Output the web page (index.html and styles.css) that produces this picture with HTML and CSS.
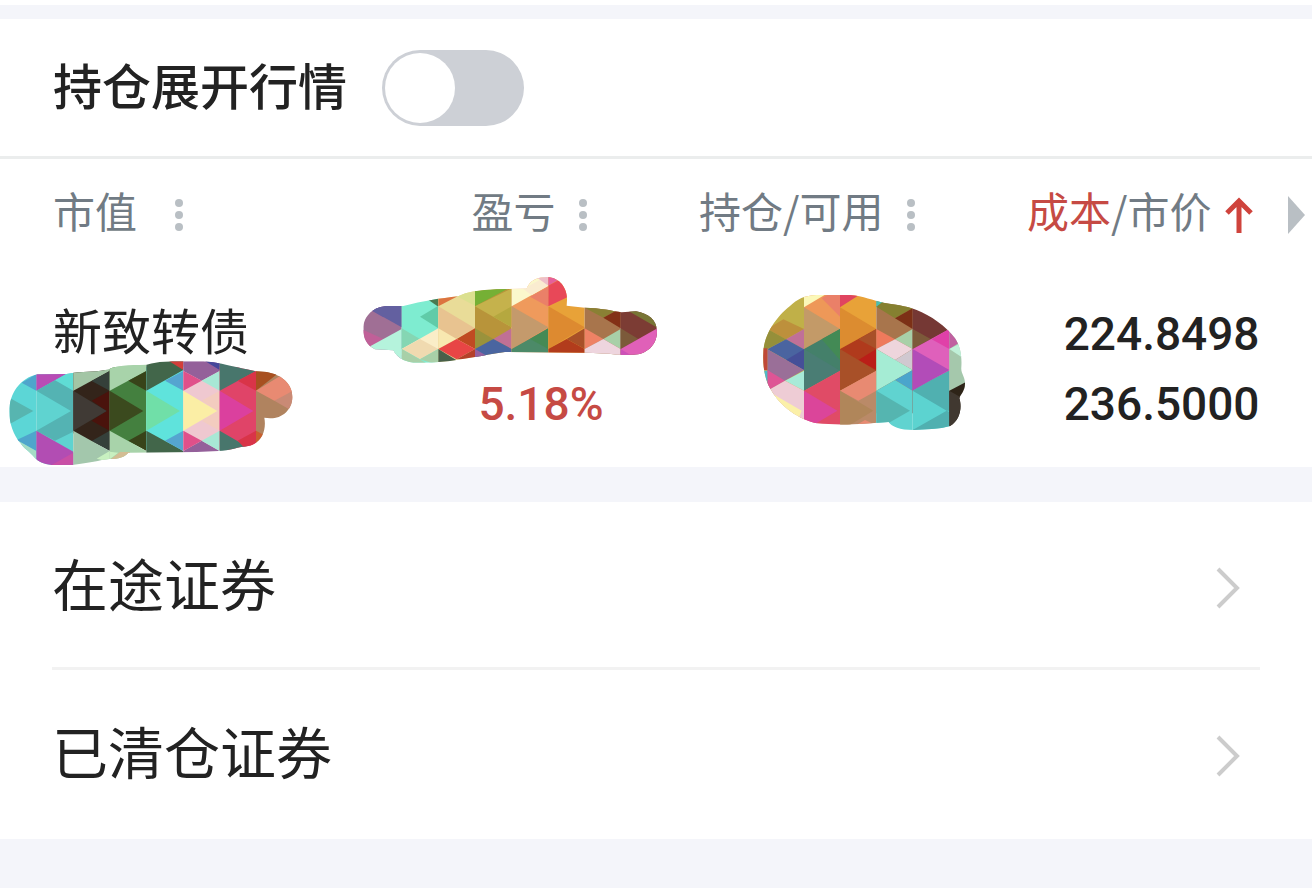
FILE: index.html
```
<!DOCTYPE html>
<html lang="zh-CN">
<head>
  <meta charset="UTF-8">
  <meta name="viewport" content="width=device-width, initial-scale=1.0">
  <title>持仓</title>
  <link rel="stylesheet" href="styles.css">
</head>
<body>
  <main>
    <section class="panel holdings">
      <div class="toolbar">
        <label for="expand">持仓展开行情</label>
        <input type="checkbox" id="expand" class="switch" role="switch">
      </div>

      <table class="positions">
        <thead>
          <tr>
            <th class="col-name" scope="col">
              <button class="sort" type="button"><span class="label">市值</span>
                <svg class="icon" viewBox="0 0 40 40" fill="#b9bfc4"><circle cx="20" cy="7" r="4"/><circle cx="20" cy="19" r="4"/><circle cx="20" cy="31" r="4"/></svg>
              </button>
            </th>
            <th scope="col">
              <button class="sort" type="button"><span class="label">盈亏</span>
                <svg class="icon" viewBox="0 0 40 40" fill="#b9bfc4"><circle cx="19" cy="7" r="4"/><circle cx="19" cy="19" r="4"/><circle cx="19" cy="31" r="4"/></svg>
              </button>
            </th>
            <th scope="col">
              <button class="sort" type="button"><span class="label">持仓/可用</span>
                <svg class="icon" viewBox="0 0 40 40" fill="#b9bfc4"><circle cx="19" cy="7" r="4"/><circle cx="19" cy="19" r="4"/><circle cx="19" cy="31" r="4"/></svg>
              </button>
            </th>
            <th scope="col">
              <button class="sort" type="button"><span class="label"><span class="red">成本</span>/市价</span>
                <svg class="icon" viewBox="0 0 40 40" fill="none" stroke="#cf433c" stroke-width="5"><path d="M19 37V5M7 17L19 5L31 17"/></svg>
              </button>
            </th>
            <th class="col-more" scope="col">
              <button class="more" type="button" aria-label="更多"><svg viewBox="0 0 18 38" fill="#b9bfc4"><path d="M0 0L17 19L0 38Z"/></svg></button>
            </th>
          </tr>
        </thead>
        <tbody>
          <tr>
            <td class="col-name">
              <span class="name">新致转债</span>
              <svg class="mosaic mosaic-name" viewBox="0 0 930 375">
                <clipPath id="clip-name"><path d="M28 185C28 130 60 85 112 73L200 72L222 68C260 64 295 66 328 57C350 46 380 45 440 44C480 34 500 34 550 34L610 34C650 36 690 48 768 64L800 66C850 75 878 105 877 143C876 180 845 206 810 205L793 203C800 240 785 280 745 288C715 290 690 303 655 303L590 306L385 308C375 322 350 328 328 327C300 330 265 340 222 344L155 345C130 342 115 335 105 324C90 305 70 295 62 280C40 255 28 220 28 185Z"/></clipPath>
                <g clip-path="url(#clip-name)">
                  <path fill="#5cd6d6" d="M0 0H109V375H0Z"/>
                  <path fill="#57b5b0" d="M28 143L100 183L28 223Z"/>
                  <path fill="#4fa5cc" d="M65 98L109 72V122ZM50 270L109 242V303Z"/>
                  <path fill="#a5dcc5" d="M50 270L109 303V345H50Z"/>
                  <path fill="#5fd3d0" d="M109 0H220V375H109Z"/>
                  <path fill="#b84cb5" d="M109 60H220L109 122Z"/>
                  <path fill="#5fdcd5" d="M165 91L220 60V125Z"/>
                  <path fill="#54b3b3" d="M109 122L165 91L220 122V245L165 272L109 242L213 183Z"/>
                  <path fill="#b24db3" d="M109 242L220 305V345H109Z"/>
                  <path fill="#c94fa5" d="M155 345L220 308V345Z"/>
                  <path fill="#33241a" d="M220 60H329V300L220 250Z"/>
                  <path fill="#a3c5a5" d="M220 40H329V63L220 122Z"/>
                  <path fill="#35403a" d="M275 93L329 63V122ZM275 273L329 242V303Z"/>
                  <path fill="#4a130c" d="M275 152L329 122V242L275 212L320 183Z"/>
                  <path fill="#403a35" d="M220 122L320 183L220 242Z"/>
                  <path fill="#a3c7ac" d="M220 242L329 303V350H220Z"/>
                  <path fill="#c8f0c0" d="M290 326L329 303V335Z"/>
                  <path fill="#44803f" d="M329 50H439V300L329 250Z"/>
                  <path fill="#a8d3aa" d="M329 40H439V63L329 122Z"/>
                  <path fill="#384319" d="M385 92L439 63V122ZM385 272L439 242V303Z"/>
                  <path fill="#3b4a1e" d="M329 122L430 183L329 242Z"/>
                  <path fill="#a8d3aa" d="M329 242L439 303V335H329Z"/>
                  <path fill="#c8f0c0" d="M329 305L355 308L329 328Z"/>
                  <path fill="#d3bd93" d="M329 330L360 306H390V330Z"/>
                  <path fill="#5fe3dc" d="M439 50H550V300H439Z"/>
                  <path fill="#42664a" d="M439 30H550V60L439 122ZM439 242L550 303V315H439Z"/>
                  <path fill="#d33e3a" d="M502 30H550V60Z"/>
                  <path fill="#55a5d0" d="M495 92L550 63V122ZM495 272L550 242V303Z"/>
                  <path fill="#70dfa8" d="M439 122L540 183L439 242Z"/>
                  <path fill="#efc8d0" d="M550 50H659V300H550Z"/>
                  <path fill="#94609a" d="M550 30H659V63L605 92L550 63ZM550 303L605 272L659 303V315H550Z"/>
                  <path fill="#45479a" d="M610 30H659V60Z"/>
                  <path fill="#e0508a" d="M550 63L605 92L550 122ZM550 242L605 272L550 303Z"/>
                  <path fill="#a8e8d5" d="M605 92L659 63V122ZM605 272L659 242V303Z"/>
                  <path fill="#f3ccbf" d="M605 152L659 122V242L605 212L652 183Z"/>
                  <path fill="#fbeea5" d="M550 122L652 183L550 242Z"/>
                  <path fill="#e04468" d="M659 50H768V300H659Z"/>
                  <path fill="#48766c" d="M659 30H768V63L659 122ZM659 242L742 290L659 315Z"/>
                  <path fill="#d93448" d="M713 92L768 63V122ZM713 272L768 242V303H742Z"/>
                  <path fill="#db409e" d="M659 122L760 183L659 242Z"/>
                  <path fill="#b0835f" d="M768 0H880V375H768Z"/>
                  <path fill="#a85020" d="M768 50H860L768 122Z"/>
                  <path fill="#e88a72" d="M768 122L850 72L880 90V152H823Z"/>
                  <path fill="#c98a75" d="M823 152L880 122V185Z"/>
                  <path fill="#c8602f" d="M768 242L805 262L768 300Z"/>
                </g>
              </svg>
            </td>
            <td>
              <span class="num red">5.18%</span>
              <svg class="mosaic mosaic-profit" viewBox="0 0 960 330">
                <clipPath id="clip-profit"><path d="M40 192C40 150 75 122 115 123L160 123C220 108 270 100 325 94C350 80 390 76 440 73L530 71C540 45 565 35 593 36C630 38 652 70 651 105L650 122L704 128C750 128 790 138 815 142L858 139C895 145 921 165 921 200C921 240 890 268 850 269L800 269C770 264 740 265 704 263L465 261C430 266 400 272 375 276L300 288L240 293L190 293C160 290 140 275 130 256L75 253C50 240 40 220 40 192Z"/></clipPath>
                <g clip-path="url(#clip-profit)">
                  <path fill="#a06f95" d="M0 0H155V330H0Z"/>
                  <path fill="#7a5aa0" d="M45 125H110L100 157Z"/>
                  <path fill="#6360a0" d="M45 125L155 110V187Z"/>
                  <path fill="#c06098" d="M30 190L100 222L65 245H30Z"/>
                  <path fill="#b5f3dc" d="M55 247L155 192V270H55Z"/>
                  <path fill="#7eecd0" d="M155 0H265V330H155Z"/>
                  <path fill="#4a7a50" d="M228 100H265V125Z"/>
                  <path fill="#60cba8" d="M210 155L265 122V190Z"/>
                  <path fill="#85d6b3" d="M155 190L210 222L155 252Z"/>
                  <path fill="#faedc8" d="M155 252L265 190V252Z"/>
                  <path fill="#f0dab0" d="M155 252L210 222L265 252L210 283Z"/>
                  <path fill="#a8d0a8" d="M155 252L230 295H155ZM210 283L265 252V300Z"/>
                  <path fill="#b5f3dc" d="M120 240L155 252V300H120Z"/>
                  <path fill="#e9dc98" d="M265 0H375V330H265Z"/>
                  <path fill="#dc7440" d="M265 90H330L265 124Z"/>
                  <path fill="#dbe08f" d="M320 94L375 70V122Z"/>
                  <path fill="#e8c390" d="M265 124L375 190L265 250Z"/>
                  <path fill="#f8e8b0" d="M265 190L320 222L265 252Z"/>
                  <path fill="#c04a22" d="M320 222L375 190V252Z"/>
                  <path fill="#e84545" d="M265 252L320 222L375 252L320 283Z"/>
                  <path fill="#48604a" d="M265 252L335 295H265Z"/>
                  <path fill="#b5402a" d="M320 283L375 252V285Z"/>
                  <path fill="#b8943a" d="M375 0H485V330H375Z"/>
                  <path fill="#75b035" d="M375 65H485L375 124Z"/>
                  <path fill="#c5b24c" d="M375 124L485 70V187Z"/>
                  <path fill="#b5a83f" d="M430 155L485 124V187Z"/>
                  <path fill="#9a923c" d="M375 190L430 222L375 252Z"/>
                  <path fill="#c07095" d="M430 222L485 190V252Z"/>
                  <path fill="#4a65a0" d="M375 252L430 222L485 252V275H375Z"/>
                  <path fill="#9560a0" d="M375 252L415 275L375 285Z"/>
                  <path fill="#ef9a5c" d="M485 0H595V330H485Z"/>
                  <path fill="#fbf8cc" d="M485 60L595 30V62L485 124Z"/>
                  <path fill="#faecd0" d="M520 72L595 30V62L545 91Z"/>
                  <path fill="#eebfc8" d="M550 30H595V62Z"/>
                  <path fill="#ea8068" d="M540 95L595 65V125Z"/>
                  <path fill="#c49a6c" d="M485 124L595 187L485 252Z"/>
                  <path fill="#4c8a68" d="M485 252L595 190V265H485Z"/>
                  <path fill="#458a55" d="M540 222L595 190V252Z"/>
                  <path fill="#e8a238" d="M595 0H704V330H595Z"/>
                  <path fill="#e5609a" d="M595 30H651L595 62Z"/>
                  <path fill="#e84858" d="M595 62L655 30V95L595 124Z"/>
                  <path fill="#dd8a30" d="M595 124L704 187L595 252Z"/>
                  <path fill="#a85028" d="M650 222L704 190V252Z"/>
                  <path fill="#b23c1c" d="M595 252L650 222L704 252V268H595Z"/>
                  <path fill="#a8754c" d="M704 0H812V330H704Z"/>
                  <path fill="#8a8034" d="M704 120H812V130L760 158L704 128Z"/>
                  <path fill="#833015" d="M760 158L812 130V190Z"/>
                  <path fill="#ee8265" d="M704 190L760 222L704 252Z"/>
                  <path fill="#a8d0a8" d="M760 222L812 192V252Z"/>
                  <path fill="#eed5de" d="M704 252L760 222L812 252V275H704Z"/>
                  <path fill="#7c3c34" d="M812 0H925V330H812Z"/>
                  <path fill="#787535" d="M830 135H925V190Z"/>
                  <path fill="#7c5a3a" d="M812 190L865 222L812 252Z"/>
                  <path fill="#e060b8" d="M812 252L925 188V275H812Z"/>
                  <path fill="#cc50b8" d="M812 252L850 275H812Z"/>
                </g>
              </svg>
            </td>
            <td>
              <svg class="mosaic mosaic-amount" viewBox="0 0 690 480">
                <clipPath id="clip-amount"><path d="M40 220C42 160 80 110 120 78C140 58 165 46 200 45L300 45C340 48 370 62 400 68C450 76 480 80 500 90C540 105 590 140 615 175C632 200 636 230 634 262C632 280 645 290 645 310C645 335 630 345 628 355C636 380 632 420 600 438C570 448 520 448 490 450C450 450 425 440 416 426L340 431C300 434 240 434 200 430C150 420 90 380 62 328C45 300 38 260 40 220Z"/></clipPath>
                <g clip-path="url(#clip-amount)">
                  <path fill="#c0b048" d="M0 0H162V480H0Z"/>
                  <path fill="#bd903c" d="M52 147L100 118L162 147L108 178Z"/>
                  <path fill="#958f3a" d="M40 140L108 178L52 207H40Z"/>
                  <path fill="#c07098" d="M108 178L162 147V208Z"/>
                  <path fill="#4a64a0" d="M52 208L108 178L162 208V270Z"/>
                  <path fill="#454f98" d="M108 240L162 208V270Z"/>
                  <path fill="#9a6f98" d="M52 208L162 270L52 332Z"/>
                  <path fill="#de5595" d="M52 270L105 302L52 332Z"/>
                  <path fill="#a8ead8" d="M105 302L162 272V332Z"/>
                  <path fill="#eeccd5" d="M52 332L105 302L162 332V440H52Z"/>
                  <path fill="#fbf0a8" d="M52 332L155 392L140 430H52Z"/>
                  <path fill="#c04838" d="M30 205H52V270H30Z"/>
                  <path fill="#4fb8c8" d="M30 272H52V330H30Z"/>
                  <path fill="#ee9858" d="M162 0H270V400H162Z"/>
                  <path fill="#fbf8b8" d="M162 40H232L162 82Z"/>
                  <path fill="#ea8068" d="M215 55L240 40H270V110Z"/>
                  <path fill="#c39a68" d="M162 82L270 147L162 207Z"/>
                  <path fill="#44806a" d="M162 207L270 147V272L162 332Z"/>
                  <path fill="#438a55" d="M215 178L270 147V240Z"/>
                  <path fill="#4a7d74" d="M162 207L270 272L162 332Z"/>
                  <path fill="#e04b66" d="M162 332L270 272V440H162Z"/>
                  <path fill="#db459a" d="M162 332L262 392L190 435H162Z"/>
                  <path fill="#e8a238" d="M270 0H379V400H270Z"/>
                  <path fill="#e04560" d="M270 40H335L270 82Z"/>
                  <path fill="#dc8c30" d="M270 82L379 147L270 207Z"/>
                  <path fill="#b03a1c" d="M270 207L379 147V272L270 332Z"/>
                  <path fill="#a85028" d="M325 178L379 147V207Z"/>
                  <path fill="#ba1e18" d="M325 240L379 207V270Z"/>
                  <path fill="#a85028" d="M270 207L379 272L270 332Z"/>
                  <path fill="#ba8a68" d="M270 332L379 272V440H270Z"/>
                  <path fill="#e88a72" d="M270 332L379 272V332L325 362Z"/>
                  <path fill="#b0865a" d="M270 332L370 392L300 435H270Z"/>
                  <path fill="#e88a72" d="M318 436L345 420L379 436Z"/>
                  <path fill="#a8754c" d="M379 0H488V400H379Z"/>
                  <path fill="#48c0b0" d="M379 50H405V64L379 82Z"/>
                  <path fill="#858030" d="M379 80L405 60H488V85L435 115Z"/>
                  <path fill="#7c3016" d="M435 115L488 85V147Z"/>
                  <path fill="#ee7a5c" d="M379 147L435 178L379 207Z"/>
                  <path fill="#a8d0a8" d="M435 178L488 147V207Z"/>
                  <path fill="#eed5dc" d="M379 207L435 178L488 207L435 240Z"/>
                  <path fill="#d0c8d0" d="M435 240L488 207V270Z"/>
                  <path fill="#a5ecd4" d="M379 207L488 270L379 332Z"/>
                  <path fill="#4aa5cc" d="M435 300L488 270V332Z"/>
                  <path fill="#60d3d0" d="M379 332L435 300L488 332V460H379Z"/>
                  <path fill="#55b5b0" d="M379 332L480 392L379 450Z"/>
                  <path fill="#753834" d="M488 0H598V400H488Z"/>
                  <path fill="#7c5a3a" d="M488 147L542 177L488 207Z"/>
                  <path fill="#df60bb" d="M488 207L598 147V272L488 332Z"/>
                  <path fill="#e040a8" d="M545 178L598 147V207Z"/>
                  <path fill="#b24cb8" d="M488 207L598 270L488 332Z"/>
                  <path fill="#5cd3d0" d="M488 332L598 272V460H488Z"/>
                  <path fill="#50b0b0" d="M540 302L598 272V392L590 392L488 332ZM488 450L590 392L598 396V460H488Z"/>
                  <path fill="#a5c8ac" d="M598 0H660V320L598 340Z"/>
                  <path fill="#c060a0" d="M598 140H625V190L598 207Z"/>
                  <path fill="#c0f0d8" d="M598 207L640 185V235Z"/>
                  <path fill="#2e2418" d="M598 332L650 305V460H598Z"/>
                  <path fill="#403830" d="M598 332L650 362V460H598Z"/>
                </g>
              </svg>
            </td>
            <td>
              <span class="num">224.8498</span>
              <span class="num">236.5000</span>
            </td>
            <td class="col-more"></td>
          </tr>
        </tbody>
      </table>
    </section>

    <nav class="panel links">
      <a href="#transit"><span>在途证券</span>
        <svg class="chevron" viewBox="0 0 26 42" fill="none" stroke="#cccccc" stroke-width="4"><path d="M2 2L21 21L2 40"/></svg>
      </a>
      <a href="#cleared"><span>已清仓证券</span>
        <svg class="chevron" viewBox="0 0 26 42" fill="none" stroke="#cccccc" stroke-width="4"><path d="M2 2L21 21L2 40"/></svg>
      </a>
    </nav>
  </main>
</body>
</html>
```
FILE: styles.css
```
*{margin:0;padding:0;box-sizing:border-box;}
body{border-top:5px solid #fff;background:#f4f5fa;color:#222;font-family:"Noto Sans CJK SC", sans-serif;}
main{padding-top:14px;}
button{border:0;background:none;color:inherit;font:inherit;cursor:pointer;}
.panel{background:#fff;}
.red{color:#c64a44;}

.toolbar{display:flex;align-items:center;gap:35px;height:140px;padding-left:53px;border-bottom:3px solid #ebeded;font-size:49px;font-weight:500;}
.toolbar label{padding-bottom:8px;}
.switch{position:relative;width:142px;height:76px;border-radius:38px;background:#cdd0d6;appearance:none;cursor:pointer;}
.switch::before{content:"";position:absolute;top:3px;left:3px;width:70px;height:70px;border-radius:50%;background:#fff;transition:left .2s;}
.switch:checked{background:#c64a44;}
.switch:checked::before{left:69px;}

.positions{width:100%;border-collapse:collapse;table-layout:fixed;}
.positions th{width:25%;height:108px;padding-top:4px;color:#717b84;font-size:42px;font-weight:400;text-align:right;vertical-align:middle;white-space:nowrap;}
.positions td{position:relative;height:200px;padding:32px 0 28px;text-align:right;vertical-align:bottom;}
.positions .col-name{width:21%;padding-left:53px;text-align:left;}
.positions td.col-name{vertical-align:top;}
.positions .col-more{width:4%;padding-right:6px;line-height:0;}
.sort{display:inline-flex;align-items:center;gap:8px;line-height:60px;vertical-align:middle;}
.sort .label{padding-bottom:12px;}
.col-name .sort{gap:22px;}
.icon{width:40px;height:40px;}
.more svg{display:block;width:18px;height:38px;}
.name{display:block;font-size:49px;line-height:60px;white-space:nowrap;}
.num{display:block;font-family:Roboto, sans-serif;font-size:46px;font-weight:500;line-height:70px;}

/* brush strokes hiding the private values */
.mosaic{position:absolute;pointer-events:none;}
.mosaic-name{top:83px;left:0;width:310px;height:125px;}
.mosaic-profit{top:-2px;right:-66px;width:320px;height:110px;}
.mosaic-amount{top:13px;right:-48px;width:230px;height:160px;}

.links{margin-top:35px;padding:0 52px 1px;}
.links a{display:flex;justify-content:space-between;align-items:center;height:168px;padding:6px 18px 0 0;border-bottom:3px solid #f2f2f2;color:inherit;font-size:56px;text-decoration:none;}
.links a:last-child{border-color:transparent;}
.links span{padding-bottom:12px;}
.chevron{width:26px;height:42px;}
```
